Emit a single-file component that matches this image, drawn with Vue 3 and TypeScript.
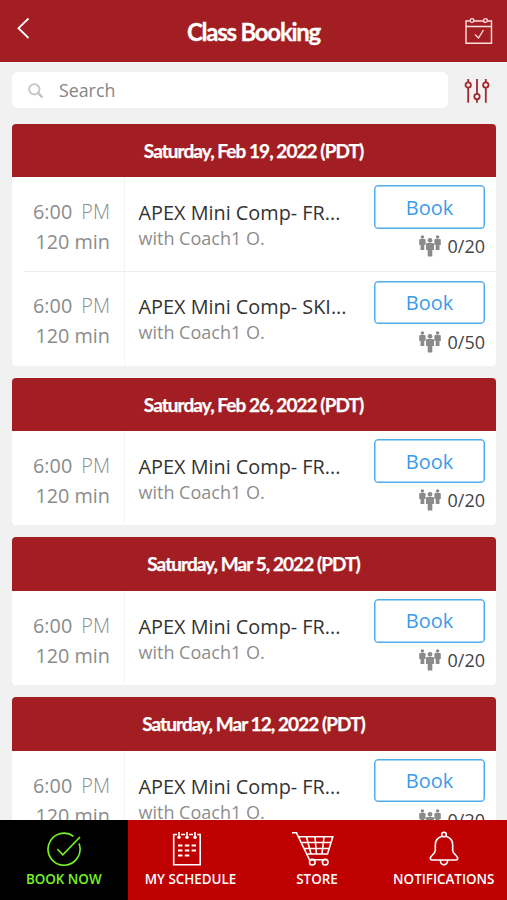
<script setup lang="ts">
interface ClassItem {
  time: string
  period: string
  duration: string
  title: string
  coach: string
  spots: string
}

interface Day {
  label: string
  items: ClassItem[]
}

const makeClass = (title: string, spots: string): ClassItem => ({
  time: '6:00',
  period: 'PM',
  duration: '120 min',
  title,
  coach: 'with Coach1 O.',
  spots,
})

const days: Day[] = [
  {
    label: 'Saturday, Feb 19, 2022 (PDT)',
    items: [makeClass('APEX Mini Comp- FR...', '0/20'), makeClass('APEX Mini Comp- SKI...', '0/50')],
  },
  { label: 'Saturday, Feb 26, 2022 (PDT)', items: [makeClass('APEX Mini Comp- FR...', '0/20')] },
  { label: 'Saturday, Mar 5, 2022 (PDT)', items: [makeClass('APEX Mini Comp- FR...', '0/20')] },
  { label: 'Saturday, Mar 12, 2022 (PDT)', items: [makeClass('APEX Mini Comp- FR...', '0/20')] },
]
</script>

<template>
  <div class="screen">
    <header class="topbar">
      <svg class="back" width="14" height="24" viewBox="0 0 14 24">
        <path d="M11.500 2.500 1.500 12.200l10 9.800" />
      </svg>
      <h1>Class Booking</h1>
      <svg class="calendar" width="30" height="28" viewBox="0 0 30 28">
        <path d="M5.500 4H2v22.300h25.500V4H24M10 4h9.500M2 9.500h25.500" />
        <circle cx="8" cy="3.500" r="1.900" />
        <circle cx="21.500" cy="3.500" r="1.900" />
        <path d="m11 17.500 3.500 3.500 5-8" />
      </svg>
    </header>

    <main class="content">
      <div class="search-row">
        <label class="search">
          <svg width="16" height="16" viewBox="0 0 16 16">
            <circle cx="6.300" cy="6.300" r="5.200" />
            <path class="handle" d="m10.400 10.400 4 4" />
          </svg>
          <span>Search</span>
        </label>
        <svg class="filters" width="26" height="26" viewBox="0 0 26 26">
          <path d="M4.200 1v3.200M4.200 9.800v15M13 1v14.800M13 21.400v3.400M21.800 1v3.200M21.800 9.800v15" />
          <circle cx="4.200" cy="7" r="2.700" />
          <circle cx="13" cy="18.600" r="2.700" />
          <circle cx="21.800" cy="7" r="2.700" />
        </svg>
      </div>

      <section v-for="day in days" :key="day.label" class="day">
        <h2>{{ day.label }}</h2>
        <article v-for="item in day.items" :key="item.title" class="row">
          <div class="when">
            <div class="time">{{ item.time }} <span>{{ item.period }}</span></div>
            <div class="duration">{{ item.duration }}</div>
          </div>
          <div class="what">
            <div class="title">{{ item.title }}</div>
            <div class="coach">{{ item.coach }}</div>
          </div>
          <div class="action">
            <button type="button">Book</button>
            <div class="spots">
              <svg width="22" height="22" viewBox="0 0 22 22">
                <circle cx="3.400" cy="2" r="1.800" />
                <path d="M1.200 4.100h4.400q1 0 1 1v5H5.300V15H1.500v-4.900H.2v-5q0-1 1-1Z" />
                <circle cx="18.600" cy="2" r="1.800" />
                <path d="M16.400 4.100h4.400q1 0 1 1v5h-1.300V15h-3.800v-4.900h-1.300v-5q0-1 1-1Z" />
                <circle cx="11" cy="5.300" r="2.400" />
                <path d="M8.200 8h5.600q1.200 0 1.200 1.200V15h-1.700v6.500H8.700V15H7V9.200Q7 8 8.200 8Z" />
              </svg>
              <span>{{ item.spots }}</span>
            </div>
          </div>
        </article>
      </section>
    </main>

    <nav class="tabs">
      <a class="tab active">
        <svg width="36" height="36" viewBox="0 0 36 36">
          <path d="M27.500 5.300A16 16 0 1 0 33 12.500" />
          <path d="m11.300 18 5.500 5.800L34 6" />
        </svg>
        <span>BOOK NOW</span>
      </a>
      <a class="tab">
        <svg class="shifted" width="36" height="36" viewBox="0 0 36 36">
          <path d="M8 3.500H4.700v30.200h26.500V3.500H28M12 3.500h4M20 3.500h4" />
          <path d="M10 1v5M18 1v5M26 1v5" />
          <g class="beads">
            <circle cx="10" cy="6.300" r="1.700" />
            <circle cx="18" cy="6.300" r="1.700" />
            <circle cx="26" cy="6.300" r="1.700" />
          </g>
          <path class="dates" d="M9 14.500h4.500M15.800 14.500h4.500M22.600 14.500h4.500M9 19.500h4.500M15.800 19.500h4.500M22.600 19.500h4.500M9 24.500h4.500M15.800 24.500h4.500" />
        </svg>
        <span>MY SCHEDULE</span>
      </a>
      <a class="tab">
        <svg class="shifted" width="42" height="36" viewBox="0 0 42 36">
          <path d="M0 1.800h4.500l13 27h15.800M6.800 5.800h34L35.500 23H15M9.500 11.500h29.700M12.200 17.500h25.200M14.500 6l4.500 17M23 6l1.500 17M32 6l-2 17" />
          <circle cx="20.300" cy="31.200" r="2.800" />
          <circle cx="33.200" cy="31.200" r="2.800" />
        </svg>
        <span>STORE</span>
      </a>
      <a class="tab">
        <svg width="36" height="36" viewBox="0 0 36 36">
          <circle cx="18" cy="3.500" r="2.300" />
          <path d="M16 5.200C11.500 6.500 9.300 9.500 9.300 14v5.500c0 3.300-5 5-5 7.800 0 1.200 1 1.700 2.200 1.700h23c1.200 0 2.200-.5 2.200-1.700 0-2.800-5-4.500-5-7.800V14c0-4.500-2.200-7.500-6.700-8.800M14.500 29v1.200a3.500 3.500 0 0 0 7 0V29" />
        </svg>
        <span>NOTIFICATIONS</span>
      </a>
    </nav>
  </div>
</template>

<style>
body {
  margin: 0;
  overflow: hidden;
}
</style>

<style scoped>
.screen {
  display: flex;
  flex-direction: column;
  width: 507px;
  height: 900px;
  overflow: hidden;
  background: #f1f1f1;
  font-family: 'Open Sans', 'Noto Sans', sans-serif;
}

svg {
  display: block;
  flex: none;
  fill: none;
  stroke: currentColor;
}

.topbar {
  display: grid;
  grid-template-columns: 60px 1fr 60px;
  align-items: center;
  flex: none;
  height: 61.500px;
  box-sizing: border-box;
  background: #a21e22;
  color: #fff;
}

.back {
  margin: 0 0 5px 17px;
  stroke-width: 1.8;
}

h1,
h2 {
  margin: 0;
  font-family: Lato, sans-serif;
  font-weight: 700;
  text-align: center;
}

h1 {
  padding-top: 3px;
  font-size: 24px;
  line-height: 30px;
  letter-spacing: -1.250px;
  -webkit-text-stroke: 0.300px #fff;
}

.calendar {
  margin-left: 17px;
  color: #ffe2df;
  stroke-width: 1.4;
}

.content {
  flex: 1;
  min-height: 0;
  overflow: hidden;
  padding: 10.500px 11px 0 12px;
}

.search-row {
  display: flex;
  align-items: center;
  margin-bottom: 15.700px;
}

.search {
  display: flex;
  align-items: center;
  gap: 15px;
  box-sizing: border-box;
  width: 436px;
  height: 36px;
  padding-left: 16px;
  border-radius: 6px;
  background: #fff;
  color: #858585;
  font-size: 17.800px;
}

.search svg {
  margin-top: 2px;
  color: #c4c4c4;
  stroke-width: 1.8;
}

.search .handle {
  stroke-width: 2.600;
}

.filters {
  margin: 2px 0 0 16px;
  color: #a3282d;
  stroke-width: 1.8;
}

.day {
  margin-bottom: 12px;
  border-radius: 4px;
  overflow: hidden;
  background: #fff;
}

h2 {
  height: 53.700px;
  padding-right: 1px;
  background: #a21e22;
  color: #fff;
  font-size: 19px;
  line-height: 53.500px;
  letter-spacing: -0.940px;
  -webkit-text-stroke: 0.250px #fff;
}

.row {
  position: relative;
  display: flex;
  height: 94.100px;
}

.row + .row::before {
  content: '';
  position: absolute;
  top: 0;
  left: 12px;
  right: 0;
  height: 1px;
  background: #eee;
}

.when {
  box-sizing: border-box;
  width: 113px;
  padding: 20px 14px 0 0;
  border-right: 1px solid #f4f4f4;
  color: #8c8c8c;
  font-size: 19.800px;
  line-height: 29.700px;
  text-align: right;
  white-space: nowrap;
}

.time span {
  margin-left: 4px;
  font-weight: 300;
}

.what {
  flex: 1;
  padding: 23px 0 0 13.500px;
  white-space: nowrap;
}

.title {
  color: #333;
  font-size: 19.850px;
  line-height: 26px;
}

.coach {
  color: #8d8d8d;
  font-size: 18px;
  line-height: 25px;
}

.action {
  width: 111px;
  margin-right: 11px;
  padding-top: 8px;
}

.row + .row .action {
  padding-top: 9.500px;
}

button {
  display: block;
  width: 111px;
  height: 43.500px;
  padding: 1px 0 0;
  border: 1.500px solid #4facea;
  border-radius: 4px;
  background: #fff;
  box-shadow: inset 0 0 0 0.500px #4facea;
  color: #3a9be8;
  font-family: inherit;
  font-size: 20px;
  line-height: 30px;
}

.spots {
  display: flex;
  align-items: center;
  justify-content: flex-end;
  gap: 7px;
  height: 35px;
  color: #444;
  font-size: 18px;
}

.spots svg {
  fill: #8a8a8a;
  stroke: none;
}

.tabs {
  display: grid;
  grid-template-columns: 127.500px 126px 127px 1fr;
  flex: none;
  height: 80px;
  background: #bf0000;
  color: #fff;
}

.tab {
  display: flex;
  flex-direction: column;
  align-items: center;
  padding-top: 11px;
  font-size: 13.400px;
  font-weight: 600;
  line-height: 18px;
  white-space: nowrap;
}

.tab svg {
  margin-bottom: 3px;
  stroke-width: 1.6;
}

.tab .shifted {
  margin-right: 8px;
}

.tab .beads {
  fill: currentColor;
  stroke: none;
}

.tab .dates {
  stroke-width: 2;
}

.active {
  background: #000;
  color: #75f322;
}
</style>
